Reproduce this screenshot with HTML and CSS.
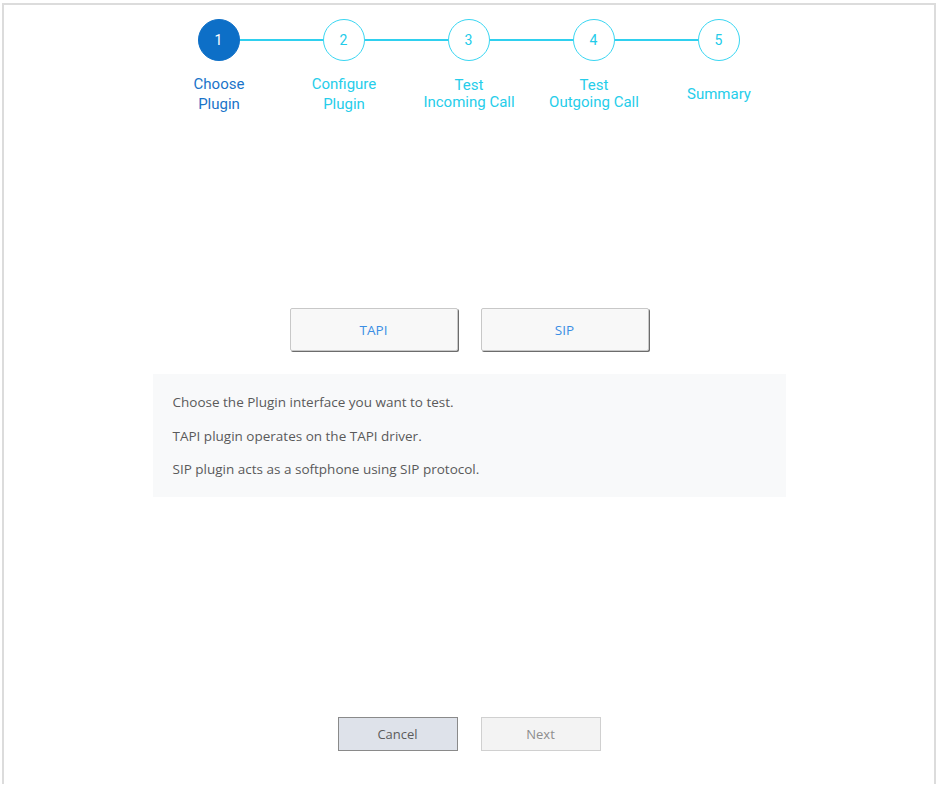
FILE: index.html
```html
<!DOCTYPE html>
<html lang="en">
<head>
  <meta charset="UTF-8" />
  <title>Plugin Test Wizard</title>
  <link rel="stylesheet" href="styles.css">
</head>
<body>
  <div class="wizard">
    <div class="stepper">
      <div class="circles">
        <span class="circle active">1</span>
        <span class="bar"></span>
        <span class="circle">2</span>
        <span class="bar"></span>
        <span class="circle">3</span>
        <span class="bar"></span>
        <span class="circle">4</span>
        <span class="bar"></span>
        <span class="circle">5</span>
      </div>
      <div class="labels">
        <div class="label active">Choose<br>Plugin</div>
        <div class="label">Configure<br>Plugin</div>
        <div class="label tight">Test<br>Incoming Call</div>
        <div class="label tight">Test<br>Outgoing Call</div>
        <div class="label">Summary</div>
      </div>
    </div>

    <div class="choices">
      <button class="choice">TAPI</button>
      <button class="choice">SIP</button>
    </div>

    <div class="info">
      <p>Choose the Plugin interface you want to test.</p>
      <p>TAPI plugin operates on the TAPI driver.</p>
      <p>SIP plugin acts as a softphone using SIP protocol.</p>
    </div>

    <div class="actions">
      <button class="cancel">Cancel</button>
      <button class="next" disabled>Next</button>
    </div>
  </div>
</body>
</html>
```

FILE: styles.css
```css
body {
  margin: 0; padding: 0;
  background: #fff;
  font-family: "Open Sans", Arial, sans-serif;
}
.wizard {
  margin: 3px 0 0 2px;
  width: 934px; height: 781px;
  border: 2px solid #dcdcdc;
  border-bottom: none;
  display: flex;
  flex-direction: column;
  align-items: center;
  padding-top: 14px;
  box-sizing: border-box;
}
.stepper {
  font-family: Roboto, Arial, sans-serif;
}
.circles {
  display: flex;
  align-items: center;
  padding: 0 41px;
}
.circle {
  width: 40px; height: 40px;
  border: 1px solid #38d6f2;
  border-radius: 50%;
  display: flex;
  align-items: center;
  justify-content: center;
  color: #22cbe9;
  font-size: 14px;
}
.circle.active {
  background: #0d6fc7;
  border-color: #0d6fc7;
  color: #fff;
}
.bar {
  width: 83px; height: 2px;
  background: #2fd0ef;
}
.labels {
  display: grid;
  grid-template-columns: repeat(5, 125px);
  margin-top: 13px;
  height: 40px;
  align-items: center;
}
.label {
  text-align: center;
  font-size: 15px;
  line-height: 20px;
  color: #26cdea;
}
.label.tight {
  line-height: 17px;
}
.label.active {
  color: #1a74c9;
}
.choices {
  display: flex;
  gap: 23px;
  margin-top: 194px;
}
.choice {
  width: 168px; height: 43px;
  background: #f8f8f8;
  border: 1px solid #c8c8c8;
  border-radius: 2px;
  box-shadow: 1px 1px 0 #6c6c6c;
  color: #3b8ee4;
  font-family: "Open Sans", Arial, sans-serif;
  font-size: 13.5px;
  cursor: pointer;
}
.info {
  margin-top: 23px;
  width: 593px;
  padding: 18px 20px;
  background: #f8f9fa;
  color: #5a5a5a;
  font-size: 13.5px;
  line-height: 20px;
}
.info p {
  margin: 0 0 13.5px;
}
.info p:last-child {
  margin-bottom: 0;
}
.actions {
  margin-top: auto;
  margin-bottom: 33px;
  display: flex;
  gap: 23px;
}
.actions button {
  width: 120px; height: 34px;
  font-family: "Open Sans", Arial, sans-serif;
  font-size: 13px;
}
.cancel {
  background: #dee2ea;
  border: 1px solid #8a8a8a;
  color: #5c5c5c;
  cursor: pointer;
}
.next {
  background: #f3f3f3;
  border: 1px solid #d0d0d0;
  color: #8d8d8d;
}
```
